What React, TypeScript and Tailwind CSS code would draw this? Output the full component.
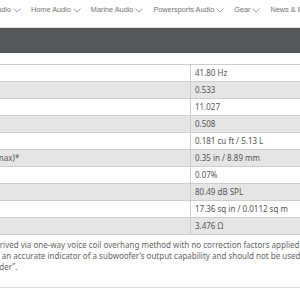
const navItems = ['Car Audio', 'Home Audio', 'Marine Audio', 'Powersports Audio', 'Gear', 'News & Events'];

const specs: [string, string][] = [
  ['Fs', '41.80 Hz'],
  ['Qts', '0.533'],
  ['Qes', '11.027'],
  ['Qms', '0.508'],
  ['Vas', '0.181 cu ft / 5.13 L'],
  ['One-Way (Xmax)*', '0.35 in / 8.89 mm'],
  ['Efficiency', '0.07%'],
  ['Sensitivity', '80.49 dB SPL'],
  ['Sd', '17.36 sq in / 0.0112 sq m'],
  ['Re', '3.476 Ω'],
];

function Chevron() {
  return (
    <svg width="8" height="5" viewBox="0 0 8 5" fill="none" className="ml-[2px] shrink-0">
      <polyline points="0.5,0.5 4,4.2 7.5,0.5" stroke="#9a9a9a" strokeWidth="0.9" />
    </svg>
  );
}

export default function App() {
  return (
    <div className="w-[300px] h-[300px] overflow-hidden bg-white font-['Noto_Sans',sans-serif]">
      <nav className="h-[28px] border-b border-[#e2e2e2] flex items-center -ml-[21px] gap-[10px] pb-[7px] text-[7.3px] text-[#737373] whitespace-nowrap font-['Liberation_Sans',sans-serif]">
        {navItems.map((item) => (
          <span key={item} className="flex items-center shrink-0">
            {item}
            <Chevron />
          </span>
        ))}
      </nav>
      <div className="h-[25px] bg-[#55585b]" />
      <div className="-ml-[53px] w-[420px] mt-[11px] border-t border-[#cdcdcd]">
        {specs.map(([label, value], i) => (
          <div
            key={label}
            className={`flex h-[17px] border-b border-[#cdcdcd] text-[8px] text-[#555] ${i % 2 === 1 ? 'bg-[#e5e5e5]' : 'bg-white'}`}
          >
            <div className="w-[244px] shrink-0 border-r border-[#cdcdcd] px-[6px] flex items-center whitespace-nowrap">{label}</div>
            <div className="flex-1 px-[4px] flex items-center whitespace-nowrap">{value}</div>
          </div>
        ))}
      </div>
      <div className="-ml-[48px] w-[420px] pt-[4px] pb-[15px] border-b border-[#dcdcdc] text-[8px] leading-[11px] text-[#666] px-[6px] whitespace-nowrap">
        <p className="-ml-[3px]">*Xmax is derived via one-way voice coil overhang method with no correction factors applied.</p>
        <p className="-ml-[2px]">Xmax is not an accurate indicator of a subwoofer’s output capability and should not be used</p>
        <p className="-ml-[9px]">as a “spec ladder”.</p>
      </div>
    </div>
  );
}
